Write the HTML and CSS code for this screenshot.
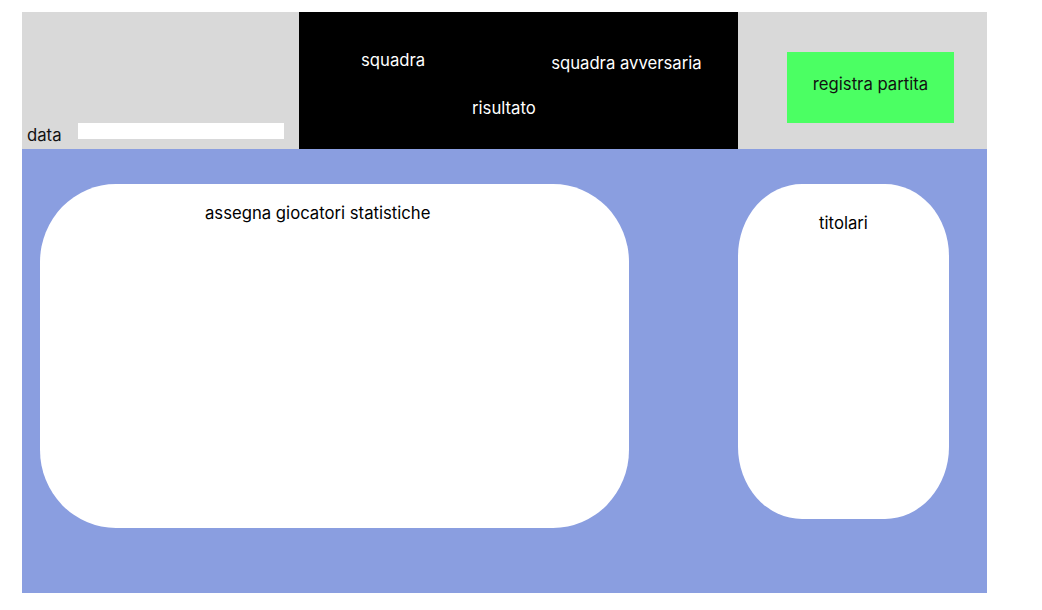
FILE: index.html
```html
<!DOCTYPE html>
<html lang="it">
<head>
<meta charset="utf-8">
<title>registra partita</title>
<link rel="stylesheet" href="styles.css">
</head>
<body>
<div class="frame">
  <header class="topbar">
    <div class="date-panel">
      <span class="date-label">data</span>
      <div class="date-input"></div>
    </div>
    <div class="match-panel">
      <div class="teams">
        <span class="team">squadra</span>
        <span class="team opponent">squadra avversaria</span>
      </div>
      <span class="score">risultato</span>
    </div>
    <div class="action-panel">
      <button class="save-btn">registra partita</button>
    </div>
  </header>
  <main class="content">
    <section class="card stats-card">
      <h2 class="card-title">assegna giocatori statistiche</h2>
    </section>
    <section class="card starters-card">
      <h2 class="card-title">titolari</h2>
    </section>
  </main>
</div>
</body>
</html>
```

FILE: styles.css
```css
* { box-sizing: border-box; }

html, body {
  margin: 0;
  background: #ffffff;
}

body {
  padding: 12px 0 0 22px;
  font-family: Inter, "Noto Sans", sans-serif;
  font-size: 16.7px;
  line-height: 20px;
  color: #000;
}

.frame {
  width: 965px;
  display: flex;
  flex-direction: column;
}

.topbar {
  display: flex;
  height: 137px;
}

.date-panel {
  width: 277px;
  background: #d9d9d9;
  display: flex;
  align-items: flex-end;
  padding: 0 0 4px 5px;
}

.date-label {
  color: #111;
}

.date-input {
  width: 206px;
  height: 16px;
  margin: 0 0 6px 16px;
  background: #ffffff;
}

.match-panel {
  width: 439px;
  background: #000000;
  color: #ffffff;
  display: flex;
  flex-direction: column;
  align-items: flex-start;
  padding-top: 38px;
}

.teams {
  display: flex;
  align-items: flex-start;
  padding-left: 62px;
}

.opponent {
  margin: 3px 0 0 126px;
}

.score {
  margin: 25px 0 0 173px;
}

.action-panel {
  width: 249px;
  background: #d9d9d9;
  padding: 40px 0 0 49px;
}

.save-btn {
  width: 167px;
  height: 71px;
  border: 0;
  margin: 0;
  padding: 0 0 7px;
  background: #4bff63;
  color: #111;
  font: inherit;
  line-height: 20px;
}

.content {
  height: 444px;
  background: #8a9ee0;
  display: flex;
  align-items: flex-start;
  padding: 35px 0 0 18px;
  gap: 109px;
}

.card {
  background: #ffffff;
}

.card-title {
  margin: 0;
  font-size: 16.7px;
  font-weight: 400;
  line-height: 20px;
}

.stats-card {
  width: 589px;
  height: 344px;
  border-radius: 76px / 78px;
  padding: 19px 0 0 165px;
}

.starters-card {
  width: 211px;
  height: 335px;
  border-radius: 64px / 72px;
  padding-top: 29px;
  text-align: center;
}
```
